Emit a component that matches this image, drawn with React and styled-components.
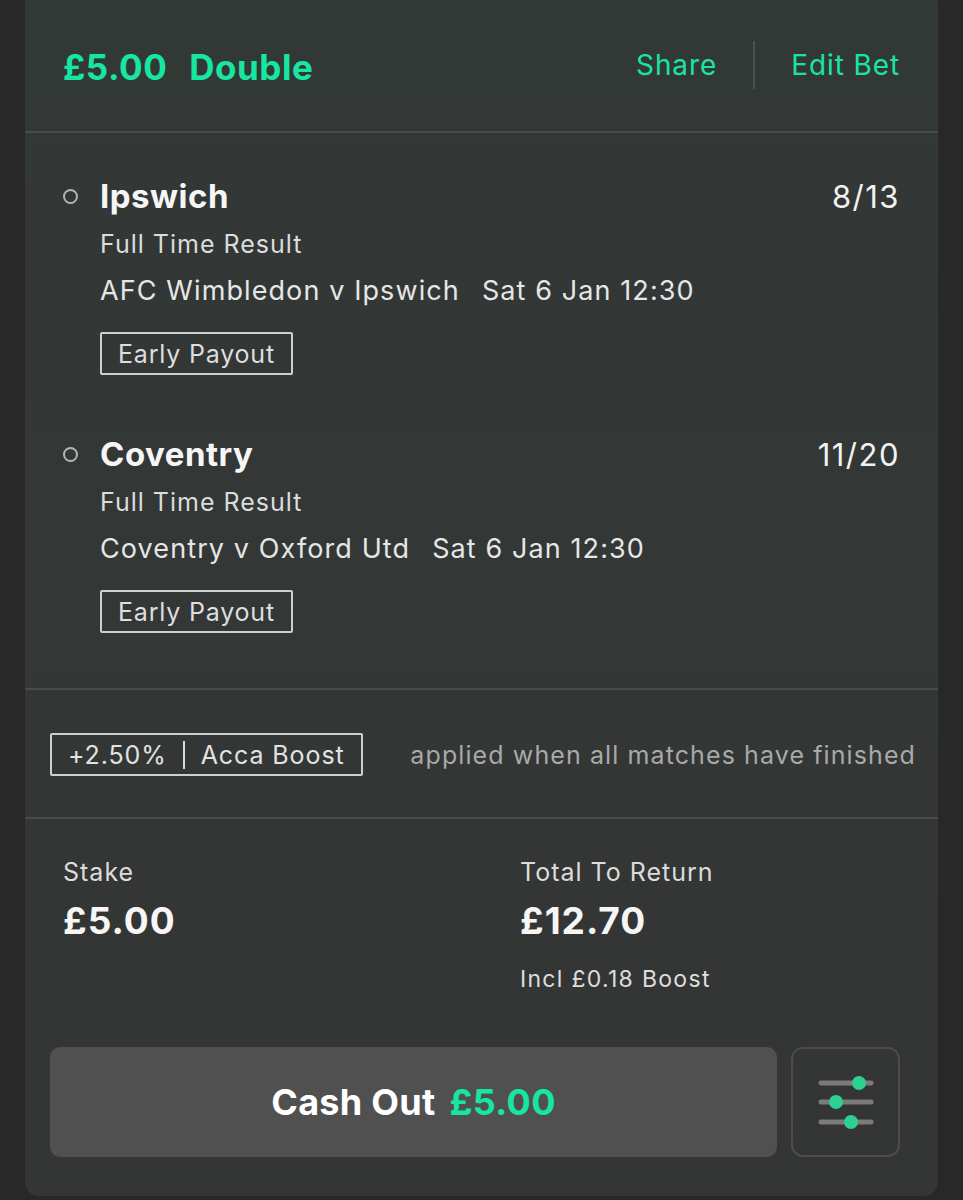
import React from 'react';
import styled, { createGlobalStyle } from 'styled-components';

const GREEN = '#17e6a1';

const GlobalStyle = createGlobalStyle`
  html, body {
    margin: 0;
    padding: 0;
    background: #272827;
    font-family: Inter, "Noto Sans", "Liberation Sans", sans-serif;
    -webkit-font-smoothing: antialiased;
  }
`;

const selections = [
  {
    name: 'Ipswich',
    odds: '8/13',
    market: 'Full Time Result',
    match: 'AFC Wimbledon v Ipswich',
    time: 'Sat 6 Jan 12:30',
  },
  {
    name: 'Coventry',
    odds: '11/20',
    market: 'Full Time Result',
    match: 'Coventry v Oxford Utd',
    time: 'Sat 6 Jan 12:30',
  },
];

const SlidersIcon = () => (
  <svg width="58" height="54" viewBox="0 0 58 54">
    {[
      { y: 8, x: 42 },
      { y: 27, x: 19 },
      { y: 47, x: 34 },
    ].map((s) => (
      <g key={s.y}>
        <line x1="4" y1={s.y} x2="54" y2={s.y} stroke="#7b7b7b" strokeWidth="5" strokeLinecap="round" />
        <circle cx={s.x} cy={s.y} r="7" fill="#2fcf92" />
      </g>
    ))}
  </svg>
);

const App = () => {
  return (
    <>
      <GlobalStyle />
      <Card>
        <Header>
          <Title>
            <span>£5.00</span>
            <span>Double</span>
          </Title>
          <Actions>
            <ActionLink>Share</ActionLink>
            <VDivider />
            <ActionLink>Edit Bet</ActionLink>
          </Actions>
        </Header>

        <Selections>
          {selections.map((s) => (
            <Selection key={s.name}>
              <Ring />
              <SelectionBody>
                <NameRow>
                  <Name>{s.name}</Name>
                  <Odds>{s.odds}</Odds>
                </NameRow>
                <Market>{s.market}</Market>
                <Match>
                  <span>{s.match}</span>
                  <span>{s.time}</span>
                </Match>
                <Badge>Early Payout</Badge>
              </SelectionBody>
            </Selection>
          ))}
        </Selections>

        <BoostRow>
          <BoostBadge>
            <span>+2.50%</span>
            <BoostSep />
            <span>Acca Boost</span>
          </BoostBadge>
          <BoostNote>applied when all matches have finished</BoostNote>
        </BoostRow>

        <Totals>
          <TotalCol>
            <TotalLabel>Stake</TotalLabel>
            <TotalValue>£5.00</TotalValue>
          </TotalCol>
          <TotalCol>
            <TotalLabel>Total To Return</TotalLabel>
            <TotalValue>£12.70</TotalValue>
            <TotalNote>Incl £0.18 Boost</TotalNote>
          </TotalCol>
        </Totals>

        <ButtonRow>
          <CashOutButton>
            Cash Out <Amount>£5.00</Amount>
          </CashOutButton>
          <SettingsButton>
            <SlidersIcon />
          </SettingsButton>
        </ButtonRow>
      </Card>
    </>
  );
};

const Card = styled.div`
  margin: -10px 25px 0;
  width: 913px;
  border-radius: 14px;
  background: linear-gradient(180deg, #323836 0%, #333736 50%, #343535 100%);
  color: #f2f2f2;
  padding-bottom: 39px;
`;

const Header = styled.div`
  height: 143px;
  box-sizing: border-box;
  padding: 12px 38px 0;
  display: flex;
  align-items: center;
  justify-content: space-between;
  border-bottom: 2px solid #464c4a;
`;

const Title = styled.div`
  display: flex;
  gap: 22px;
  color: ${GREEN};
  font-size: 35px;
  font-weight: 700;
  letter-spacing: 0.5px;
`;

const Actions = styled.div`
  display: flex;
  align-items: center;
  gap: 36px;
  margin-top: -4px;
`;

const ActionLink = styled.span`
  color: ${GREEN};
  font-size: 28px;
  font-weight: 400;
  letter-spacing: 0.9px;
`;

const VDivider = styled.div`
  width: 2px;
  height: 48px;
  background: #4b5150;
`;

const Selections = styled.div`
  padding: 39px 38px 55px;
  display: flex;
  flex-direction: column;
  gap: 55px;
  border-bottom: 2px solid #464c4a;
`;

const Selection = styled.div`
  display: flex;
  align-items: flex-start;
`;

const Ring = styled.div`
  width: 11px;
  height: 11px;
  border: 2px solid #b4b4b4;
  border-radius: 50%;
  margin: 17px 22px 0 0;
  flex-shrink: 0;
`;

const SelectionBody = styled.div`
  flex: 1;
  display: flex;
  flex-direction: column;
  align-items: flex-start;
`;

const NameRow = styled.div`
  align-self: stretch;
  display: flex;
  justify-content: space-between;
  align-items: center;
  height: 48px;
`;

const Name = styled.span`
  font-size: 33px;
  font-weight: 700;
  letter-spacing: 0.5px;
  color: #f6f6f6;
`;

const Odds = styled.span`
  font-size: 31px;
  font-weight: 400;
  letter-spacing: 1.5px;
  color: #f2f2f2;
`;

const Market = styled.div`
  font-size: 25px;
  line-height: 46px;
  margin-top: 1px;
  letter-spacing: 1px;
  color: #dcdcdc;
`;

const Match = styled.div`
  display: flex;
  gap: 22px;
  font-size: 27px;
  line-height: 46px;
  margin-top: 1px;
  letter-spacing: 1.1px;
  color: #e6e6e6;
`;

const Badge = styled.div`
  margin-top: 18px;
  height: 43px;
  box-sizing: border-box;
  padding: 0 16px;
  display: flex;
  align-items: center;
  border: 2px solid #cfcfcf;
  border-radius: 2px;
  font-size: 25px;
  letter-spacing: 0.8px;
  color: #dedede;
`;

const BoostRow = styled.div`
  padding: 43px 22px 41px 25px;
  display: flex;
  align-items: center;
  justify-content: space-between;
  border-bottom: 2px solid #464c4a;
`;

const BoostBadge = styled.div`
  height: 43px;
  box-sizing: border-box;
  padding: 0 16px;
  display: flex;
  align-items: center;
  gap: 16px;
  border: 2px solid #cfcfcf;
  border-radius: 2px;
  font-size: 25px;
  letter-spacing: 0.9px;
  color: #e2e2e2;
`;

const BoostSep = styled.div`
  width: 2px;
  height: 28px;
  background: #dadada;
`;

const BoostNote = styled.span`
  font-size: 25px;
  letter-spacing: 1.1px;
  color: #a9a9a9;
`;

const Totals = styled.div`
  padding: 35px 38px 0;
  display: grid;
  grid-template-columns: 457px 1fr;
`;

const TotalCol = styled.div`
  display: flex;
  flex-direction: column;
`;

const TotalLabel = styled.div`
  font-size: 25px;
  line-height: 36px;
  letter-spacing: 1px;
  color: #dcdcdc;
`;

const TotalValue = styled.div`
  margin-top: 8px;
  font-size: 37px;
  font-weight: 700;
  line-height: 46px;
  letter-spacing: 1px;
  color: #f6f6f6;
`;

const TotalNote = styled.div`
  margin-top: 20px;
  font-size: 23px;
  line-height: 30px;
  letter-spacing: 1.3px;
  color: #dedede;
`;

const ButtonRow = styled.div`
  margin-top: 53px;
  padding: 0 38px 0 25px;
  display: flex;
  gap: 14px;
`;

const CashOutButton = styled.div`
  flex: 1;
  height: 110px;
  border-radius: 10px;
  background: #505050;
  display: flex;
  align-items: center;
  justify-content: center;
  gap: 14px;
  font-size: 36px;
  font-weight: 700;
  letter-spacing: 0.3px;
  color: #ffffff;
`;

const Amount = styled.span`
  color: ${GREEN};
`;

const SettingsButton = styled.div`
  width: 109px;
  height: 110px;
  box-sizing: border-box;
  border: 2px solid #4c4c4c;
  border-radius: 12px;
  display: flex;
  align-items: center;
  justify-content: center;
`;

export default App;
